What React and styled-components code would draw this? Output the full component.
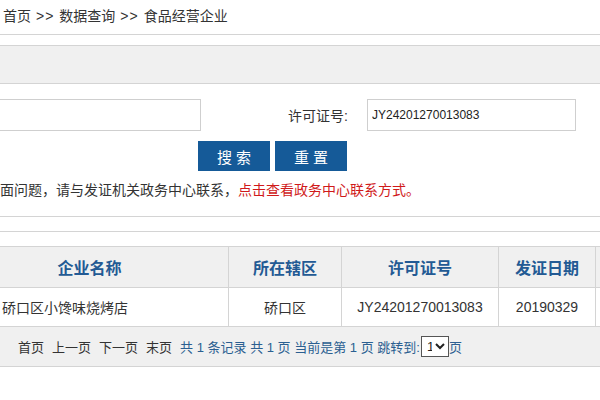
import React from "react";
import styled, { createGlobalStyle } from "styled-components";

const GlobalStyle = createGlobalStyle`
  html, body {
    margin: 0;
    padding: 0;
    background: #fff;
    overflow: hidden;
  }
  body {
    font-family: "Liberation Sans", "Noto Sans CJK SC", sans-serif;
    font-size: 14px;
    color: #333;
  }
`;

const Page = styled.div`
  width: 600px;
  overflow: hidden;
`;

const Breadcrumb = styled.div`
  height: 34px;
  line-height: 32px;
  padding-left: 3px;
  border-bottom: 1px solid #d4d4d4;
  font-size: 14px;
  color: #333;
`;

const Arrow = styled.span`
  margin: 0 5px;
  letter-spacing: 1px;
`;

const TitleBand = styled.div`
  margin-top: 10px;
  height: 37px;
  background: #f0f0f0;
  border-top: 1px solid #d4d4d4;
  border-bottom: 1px solid #d4d4d4;
`;

const SearchForm = styled.div`
  padding-top: 15px;
`;

const FieldRow = styled.div`
  display: flex;
  align-items: center;
  height: 32px;
`;

const TextInput = styled.input`
  box-sizing: border-box;
  height: 32px;
  width: ${p => p.$width}px;
  margin-left: ${p => p.$offset || 0}px;
  border: 1px solid #cfcfcf;
  padding: 0 4px;
  font-family: "Liberation Sans", "Noto Sans CJK SC", sans-serif;
  font-size: 12px;
  color: #222;
  outline: none;
`;

const Label = styled.label`
  width: 166px;
  box-sizing: border-box;
  text-align: right;
  padding-right: 19px;
  font-size: 14px;
  color: #333;
`;

const ButtonRow = styled.div`
  display: flex;
  gap: 5px;
  margin-top: 10px;
  padding-left: 198px;
`;

const Button = styled.button`
  width: 72px;
  height: 30px;
  border: none;
  background: #155a98;
  color: #fff;
  font-family: "Noto Sans CJK SC", sans-serif;
  font-size: 15px;
  letter-spacing: 4px;
  text-indent: 4px;
  padding: 0;
  cursor: pointer;
`;

const Notice = styled.p`
  margin: 0;
  height: 38px;
  line-height: 38px;
  white-space: nowrap;
  font-size: 14px;
  color: #333;
`;

const NoticeLink = styled.a`
  color: #d01a1a;
  text-decoration: none;
`;

const Divider = styled.div`
  height: 14px;
  border-top: 1px solid #d4d4d4;
  border-bottom: 1px solid #d4d4d4;
  margin-top: 7px;
`;

const Table = styled.table`
  margin-top: 14px;
  margin-left: -50px;
  border-collapse: collapse;
  table-layout: fixed;
  width: 760px;
`;

const HeadCell = styled.th`
  height: 40px;
  background: #f0f0f0;
  border: 1px solid #d4d4d4;
  color: #235a94;
  font-family: "Noto Sans CJK SC", sans-serif;
  font-size: 16px;
  font-weight: bold;
  text-align: center;
  padding: 0;
`;

const Cell = styled.td`
  height: 38px;
  border: 1px solid #d4d4d4;
  text-align: ${p => p.$align || "center"};
  padding: 0 0 0 ${p => (p.$align === "left" ? 51 : 0)}px;
  font-size: 14px;
  color: #333;
  white-space: nowrap;
`;

const Pager = styled.div`
  display: flex;
  align-items: center;
  height: 39px;
  padding-left: 18px;
  background: #f0f0f0;
  border-bottom: 1px solid #d4d4d4;
  font-size: 13px;
  white-space: nowrap;
`;

const PagerLink = styled.a`
  color: #333;
  margin-right: 8px;
  text-decoration: none;
`;

const PagerInfo = styled.span`
  color: #2b5f91;
  margin-left: ${p => p.$gap ?? 0}px;
`;

const PageSelect = styled.select`
  height: 21px;
  width: 28px;
  margin: 0 0 0 1px;
  padding: 0 0 0 1px;
  border: 1px solid #555;
  font-size: 13px;
  background: #fff;
  color: #222;
`;

export default function App() {
  return (
    <Page>
      <GlobalStyle />
      <Breadcrumb>
        首页<Arrow>&gt;&gt;</Arrow>数据查询<Arrow>&gt;&gt;</Arrow>食品经营企业
      </Breadcrumb>
      <TitleBand />
      <SearchForm>
        <FieldRow>
          <TextInput $width={212} $offset={-11} />
          <Label>许可证号:</Label>
          <TextInput $width={209} defaultValue="JY24201270013083" />
        </FieldRow>
        <ButtonRow>
          <Button>搜索</Button>
          <Button>重置</Button>
        </ButtonRow>
        <Notice>
          面问题，请与发证机关政务中心联系，
          <NoticeLink href="#">点击查看政务中心联系方式。</NoticeLink>
        </Notice>
      </SearchForm>
      <Divider />
      <Table>
        <colgroup>
          <col style={{ width: 278 }} />
          <col style={{ width: 113 }} />
          <col style={{ width: 157 }} />
          <col style={{ width: 97 }} />
          <col />
        </colgroup>
        <thead>
          <tr>
            <HeadCell>企业名称</HeadCell>
            <HeadCell>所在辖区</HeadCell>
            <HeadCell>许可证号</HeadCell>
            <HeadCell>发证日期</HeadCell>
            <HeadCell />
          </tr>
        </thead>
        <tbody>
          <tr>
            <Cell $align="left">硚口区小馋味烧烤店</Cell>
            <Cell>硚口区</Cell>
            <Cell>JY24201270013083</Cell>
            <Cell>20190329</Cell>
            <Cell />
          </tr>
        </tbody>
      </Table>
      <Pager>
        <PagerLink href="#">首页</PagerLink>
        <PagerLink href="#">上一页</PagerLink>
        <PagerLink href="#">下一页</PagerLink>
        <PagerLink href="#">末页</PagerLink>
        <PagerInfo $gap={0}>共 1 条记录 共 1 页 当前是第 1 页 跳转到:</PagerInfo>
        <PageSelect defaultValue="1">
          <option value="1">1</option>
        </PageSelect>
        <PagerInfo>页</PagerInfo>
      </Pager>
    </Page>
  );
}
